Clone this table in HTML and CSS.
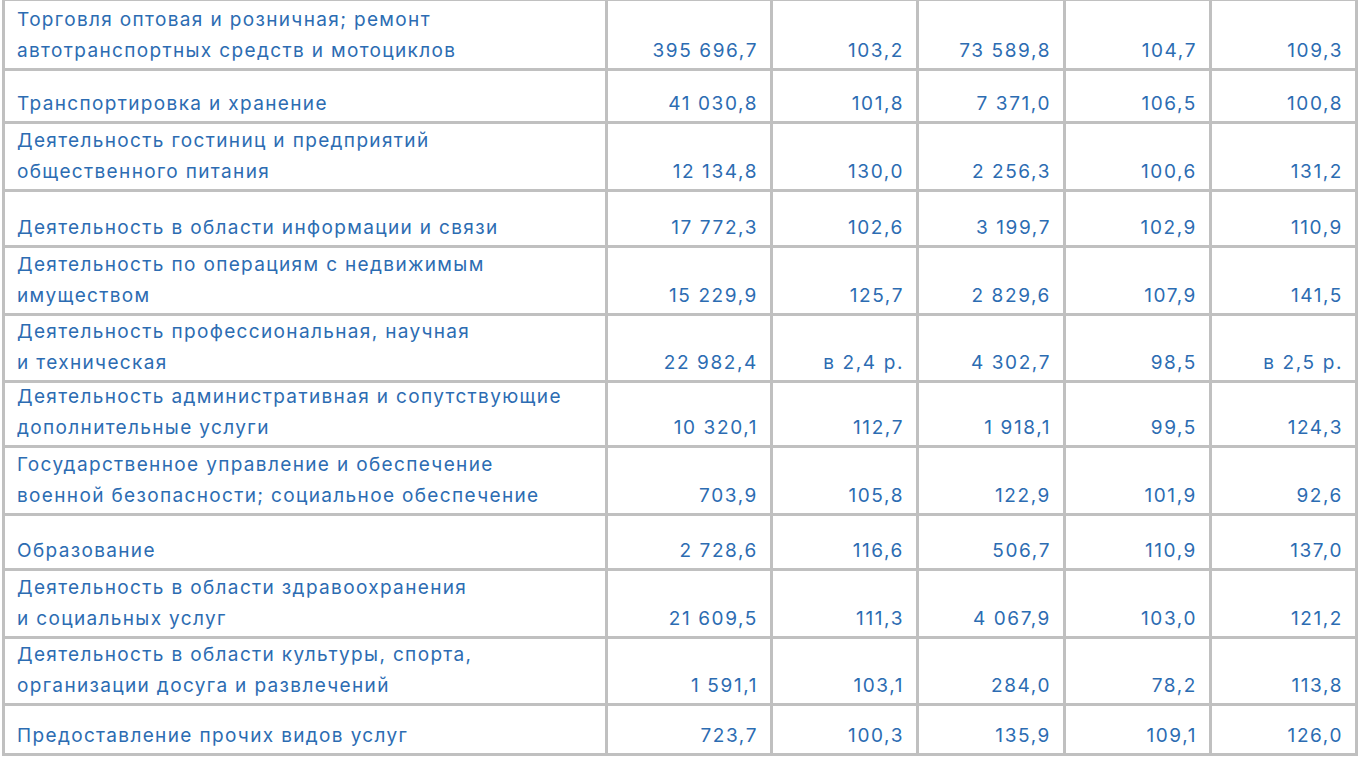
FILE: index.html
```html
<!DOCTYPE html>
<html lang="ru">
<head>
<meta charset="utf-8">
<title>Таблица</title>
<link rel="stylesheet" href="styles.css">
</head>
<body>
<div class="table">
  <div class="cell label">Торговля оптовая и розничная; ремонт<br>автотранспортных средств и мотоциклов</div>
  <div class="cell num">395 696,7</div><div class="cell num">103,2</div><div class="cell num">73 589,8</div><div class="cell num">104,7</div><div class="cell num">109,3</div>

  <div class="cell label">Транспортировка и хранение</div>
  <div class="cell num">41 030,8</div><div class="cell num">101,8</div><div class="cell num">7 371,0</div><div class="cell num">106,5</div><div class="cell num">100,8</div>

  <div class="cell label">Деятельность гостиниц и предприятий<br>общественного питания</div>
  <div class="cell num">12 134,8</div><div class="cell num">130,0</div><div class="cell num">2 256,3</div><div class="cell num">100,6</div><div class="cell num">131,2</div>

  <div class="cell label">Деятельность в области информации и связи</div>
  <div class="cell num">17 772,3</div><div class="cell num">102,6</div><div class="cell num">3 199,7</div><div class="cell num">102,9</div><div class="cell num">110,9</div>

  <div class="cell label">Деятельность по операциям с недвижимым<br>имуществом</div>
  <div class="cell num">15 229,9</div><div class="cell num">125,7</div><div class="cell num">2 829,6</div><div class="cell num">107,9</div><div class="cell num">141,5</div>

  <div class="cell label">Деятельность профессиональная, научная<br>и техническая</div>
  <div class="cell num">22 982,4</div><div class="cell num">в 2,4 р.</div><div class="cell num">4 302,7</div><div class="cell num">98,5</div><div class="cell num">в 2,5 р.</div>

  <div class="cell label">Деятельность административная и сопутствующие<br>дополнительные услуги</div>
  <div class="cell num">10 320,1</div><div class="cell num">112,7</div><div class="cell num">1 918,1</div><div class="cell num">99,5</div><div class="cell num">124,3</div>

  <div class="cell label">Государственное управление и обеспечение<br>военной безопасности; социальное обеспечение</div>
  <div class="cell num">703,9</div><div class="cell num">105,8</div><div class="cell num">122,9</div><div class="cell num">101,9</div><div class="cell num">92,6</div>

  <div class="cell label">Образование</div>
  <div class="cell num">2 728,6</div><div class="cell num">116,6</div><div class="cell num">506,7</div><div class="cell num">110,9</div><div class="cell num">137,0</div>

  <div class="cell label">Деятельность в области здравоохранения<br>и социальных услуг</div>
  <div class="cell num">21 609,5</div><div class="cell num">111,3</div><div class="cell num">4 067,9</div><div class="cell num">103,0</div><div class="cell num">121,2</div>

  <div class="cell label">Деятельность в области культуры, спорта,<br>организации досуга и развлечений</div>
  <div class="cell num">1 591,1</div><div class="cell num">103,1</div><div class="cell num">284,0</div><div class="cell num">78,2</div><div class="cell num">113,8</div>

  <div class="cell label">Предоставление прочих видов услуг</div>
  <div class="cell num">723,7</div><div class="cell num">100,3</div><div class="cell num">135,9</div><div class="cell num">109,1</div><div class="cell num">126,0</div>
</div>
</body>
</html>
```

FILE: styles.css
```css
html, body {
  margin: 0;
  padding: 0;
  background: #ffffff;
}

body {
  font-family: Inter, Roboto, "Noto Sans", sans-serif;
  font-size: 19px;
  color: #2c6cb2;
}

.table {
  display: grid;
  grid-template-columns: 600px 162px 143px 144px 143px 143px;
  grid-template-rows: 67px 50px 65px 53px 65px 64px 62px 65px 52px 65px 64px 47px;
  gap: 3px;
  padding: 1px 3px 3px 3px;
  margin-left: 2px;
  width: max-content;
  background: #c0c0c0;
}

.cell {
  background: #ffffff;
  display: flex;
  align-items: flex-end;
  line-height: 31px;
  padding-bottom: 2px;
  box-sizing: border-box;
  white-space: nowrap;
}

.label {
  padding-left: 12px;
  letter-spacing: 1.35px;
}

.num {
  justify-content: flex-end;
  padding-right: 12px;
  letter-spacing: 1.6px;
}
```
